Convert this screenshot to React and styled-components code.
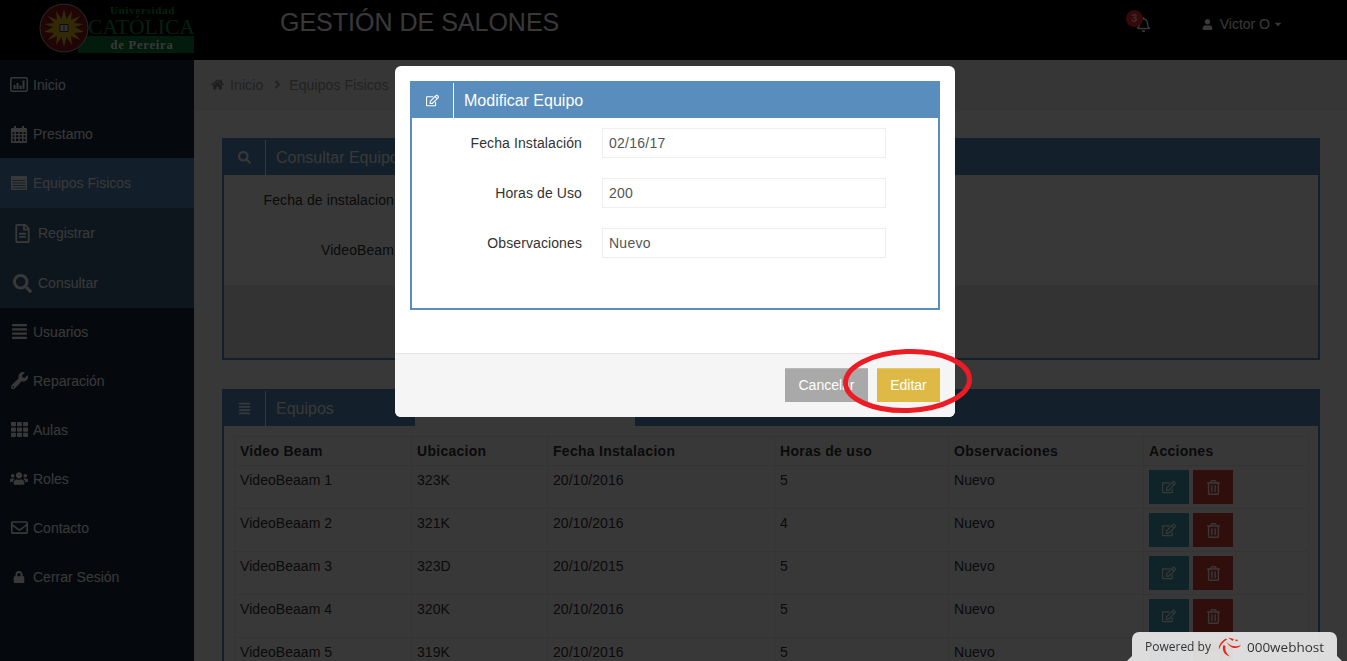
import React from 'react';
import styled, { createGlobalStyle } from 'styled-components';
import {
  FaRegFileAlt,
  FaSearch,
  FaWrench,
  FaTh,
  FaUsers,
  FaRegEnvelope,
  FaLock,
  FaHome,
  FaUser,
  FaRegBell,
  FaRegEdit,
  FaRegTrashAlt,
  FaAlignJustify,
  FaCaretDown,
  FaAngleRight,
} from 'react-icons/fa';

const BLUE = '#588dbd';

const GlobalStyle = createGlobalStyle`
  html, body {
    margin: 0;
    height: 100%;
    overflow: hidden;
    background: #fff;
  }
  body {
    font-family: "Liberation Sans", Arial, sans-serif;
    font-size: 14px;
    color: #333;
  }
  * { box-sizing: border-box; }
`;

const Page = styled.div`
  height: 661px;
  overflow: hidden;
  display: flex;
  flex-direction: column;
`;

const TopBar = styled.header`
  flex: 0 0 60px;
  background: #000;
  display: flex;
  align-items: flex-start;
  color: #fff;
`;

const LogoBox = styled.div`
  width: 194px;
  height: 60px;
  flex: none;
`;

const AppTitle = styled.h1`
  margin: 7px 0 0 86px;
  font-size: 25px;
  line-height: 30px;
  font-weight: 400;
`;

const UserArea = styled.div`
  margin-left: auto;
  padding-right: 64px;
  display: flex;
  align-items: center;
  height: 48px;
`;

const BellWrap = styled.div`
  position: relative;
  display: flex;
  margin-right: 51px;
  font-size: 15px;
`;

const Badge = styled.span`
  position: absolute;
  left: -10px;
  top: -7px;
  width: 17px;
  height: 17px;
  border-radius: 50%;
  background: #ff2a2a;
  color: #ddd;
  font-size: 11px;
  font-weight: 700;
  line-height: 17px;
  text-align: center;
`;

const UserName = styled.span`
  margin: 0 3px 0 7px;
`;

const Body = styled.div`
  flex: 1;
  display: flex;
  min-height: 0;
`;

const Sidebar = styled.nav`
  flex: 0 0 194px;
  background: #17293b;
`;

const NavItem = styled.a`
  display: flex;
  align-items: center;
  height: ${(p) => (p.$sub || p.$active ? 50 : 49)}px;
  padding-left: ${(p) => (p.$sub ? 13 : 10)}px;
  padding-bottom: ${(p) => (p.$tail ? 2 : 0)}px;
  color: #fff;
  font-size: 14px;
  background: ${(p) => (p.$active ? '#5288ba' : p.$sub ? '#406585' : 'transparent')};
`;

const NavIcon = styled.span`
  display: flex;
  justify-content: ${(p) => (p.$sub ? 'flex-start' : 'center')};
  width: ${(p) => (p.$sub ? 20 : 18)}px;
  margin-right: 5px;
  font-size: ${(p) => p.$size || 17}px;
`;

const Main = styled.main`
  flex: 1;
  min-width: 0;
  background: #fff;
`;

const Breadcrumb = styled.div`
  height: 50px;
  padding-left: 17px;
  display: flex;
  align-items: center;
  background: #f5f5f5;
  border-bottom: 1px solid #f0f0f0;
  color: #999;
  letter-spacing: 0.1px;
`;

const CrumbHome = styled.span`
  display: flex;
  font-size: 13px;
  margin-right: 6px;
  color: #888;
`;

const CrumbSep = styled.span`
  display: flex;
  margin: 0 5px 0 8px;
  font-size: 13px;
`;

const Content = styled.div`
  padding: 28px 27px 0 28px;
`;

const Panel = styled.section`
  border: 2px solid ${BLUE};
  margin-bottom: 29px;
  height: ${(p) => p.$height};
  background: #fff;
  display: flex;
  flex-direction: column;
`;

const PanelHead = styled.div`
  position: relative;
  flex: 0 0 35px;
  display: flex;
  background: ${BLUE};
  color: #fff;
`;

const HeadIcon = styled.span`
  flex: 0 0 42px;
  display: flex;
  align-items: center;
  justify-content: center;
  font-size: 13px;
  border-right: 1px solid #fff;
`;

const HeadTitle = styled.h3`
  margin: 0 0 0 10px;
  font-size: 16px;
  font-weight: 400;
  line-height: 35px;
`;

const HeadNotch = styled.div`
  position: absolute;
  left: 191px;
  bottom: 0;
  width: 220px;
  height: 9px;
  background: #fff;
`;

const PanelBody = styled.div`
  flex: 1;
  padding-top: 10px;
`;

const PanelFooter = styled.div`
  flex: 0 0 73px;
  background: #e8e8e8;
`;

const FormRow = styled.div`
  display: flex;
  align-items: center;
  height: 30px;
  margin-bottom: 20px;
`;

const FieldLabel = styled.label`
  flex: 0 0 170px;
  margin-right: 20px;
  text-align: right;
  color: #333;
  letter-spacing: 0.1px;
`;

const Field = styled.input`
  width: 284px;
  height: 30px;
  padding: 0 6px;
  border: 1px solid #eee;
  background: #fff;
  color: #555;
  font: inherit;
  letter-spacing: 0.25px;
  outline: none;
`;

const TableArea = styled.div`
  padding: 10px 10px 0;
`;

const Table = styled.table`
  width: 1074px;
  table-layout: fixed;
  border-collapse: collapse;
  letter-spacing: 0.05px;
`;

const Th = styled.th`
  width: ${(p) => p.$width}px;
  height: 29px;
  padding: 0 5px;
  text-align: left;
  font-weight: 700;
  letter-spacing: 0.28px;
  border: 1px solid #eee;
`;

const Td = styled.td`
  height: 43px;
  padding: 6px 5px 0;
  vertical-align: top;
  line-height: 17px;
  border: 1px solid #eee;
`;

const ActionCell = styled(Td)`
  padding-top: 4px;
`;

const Actions = styled.div`
  display: flex;
  gap: 4px;
`;

const ActionButton = styled.button`
  width: 40px;
  height: 34px;
  padding: 0;
  border: 0;
  display: flex;
  align-items: center;
  justify-content: center;
  color: #fff;
  font-size: ${(p) => (p.$danger ? 15 : 14)}px;
  background: ${(p) => (p.$danger ? '#d43f3a' : '#46a3b8')};
`;

const Backdrop = styled.div`
  position: fixed;
  inset: 0;
  background: rgba(0, 0, 0, 0.78);
`;

const Modal = styled.div`
  position: fixed;
  left: 395px;
  top: 66px;
  width: 560px;
  height: 351px;
  background: #fff;
  border-radius: 6px;
  display: flex;
  flex-direction: column;
`;

const ModalBody = styled.div`
  flex: 0 0 287px;
  padding: 15px;
`;

const ModalPanel = styled(Panel)`
  margin: 0;
  height: 229px;
`;

const ModalFooter = styled.div`
  flex: 1;
  display: flex;
  justify-content: flex-end;
  gap: 9px;
  padding: 14px 15px 0;
  background: #f5f5f5;
  border-top: 1px solid #e5e5e5;
  border-radius: 0 0 6px 6px;
`;

const FooterButton = styled.button`
  height: 34px;
  width: ${(p) => (p.$primary ? 63 : 83)}px;
  padding: 0 0 2px;
  border: 0;
  border-top: 1px solid ${(p) => (p.$primary ? '#e9c96b' : '#b9b9b9')};
  background: ${(p) => (p.$primary ? '#dfb946' : '#a9a9a9')};
  color: #fff;
  font: inherit;
`;

const Highlight = styled.svg`
  position: fixed;
  left: 838px;
  top: 344px;
  width: 140px;
  height: 74px;
  pointer-events: none;
`;

const HostBadge = styled.div`
  position: fixed;
  left: 1132px;
  top: 632px;
  width: 205px;
  height: 29px;
  padding: 0 0 0 13px;
  display: flex;
  align-items: center;
  white-space: nowrap;
  background: rgba(240, 240, 240, 0.9);
  border-radius: 7px 7px 0 0;
  color: #333;
  font-family: "Open Sans", sans-serif;
  font-size: 12px;

  &::before,
  &::after {
    content: '';
    position: absolute;
    bottom: 0;
    width: 5px;
    height: 5px;
    background: rgba(240, 240, 240, 0.9);
  }
  &::before {
    left: -5px;
    clip-path: polygon(100% 0, 100% 100%, 0 100%);
  }
  &::after {
    right: -5px;
    clip-path: polygon(0 0, 100% 100%, 0 100%);
  }
`;

const HostName = styled.span`
  margin-left: 5px;
  font-size: 13.5px;
`;

const ChartBoxIcon = () => (
  <svg width="18" height="15" viewBox="0 0 18 15">
    <rect x="0.75" y="0.75" width="16.5" height="13.5" rx="1.5" fill="none" stroke="currentColor" strokeWidth="1.5" />
    <path d="M3.5 8h2v4h-2zM6.5 6h2v6h-2zM9.5 8.5h2V12h-2zM12.5 3.5h2V12h-2z" fill="currentColor" />
  </svg>
);

const CalendarIcon = () => (
  <svg width="16" height="18" viewBox="0 0 16 18">
    <path
      fillRule="evenodd"
      fill="currentColor"
      d="M1 3h2V1h2v2h6V1h2v2h2a1 1 0 0 1 1 1v13a1 1 0 0 1-1 1H1a1 1 0 0 1-1-1V4a1 1 0 0 1 1-1zM1.5 7v2h2V7zm3.5 0v2h2.300V7zm3.700 0v2H11V7zm3.800 0v2h2V7zM1.500 10.300v2h2v-2zm3.500 0v2h2.300v-2zm3.700 0v2H11v-2zm3.800 0v2h2v-2zM1.500 13.600v2.600h2v-2.600zm3.500 0v2.600h2.300v-2.600zm3.700 0v2.600H11v-2.600zm3.800 0v2.600h2v-2.600z"
    />
  </svg>
);

const ListBoxIcon = () => (
  <svg width="16" height="14" viewBox="0 0 16 14">
    <path
      fillRule="evenodd"
      fill="currentColor"
      d="M1 0h14a1 1 0 0 1 1 1v12a1 1 0 0 1-1 1H1a1 1 0 0 1-1-1V1a1 1 0 0 1 1-1zm.5 4v1h13V4zm0 2.500v1h13v-1zm0 2.500v1h13V9zm0 2.500v1h13v-1z"
    />
  </svg>
);

const navItems = [
  { label: 'Inicio', icon: <ChartBoxIcon /> },
  { label: 'Prestamo', icon: <CalendarIcon /> },
  { label: 'Equipos Fisicos', icon: <ListBoxIcon />, active: true },
  { label: 'Registrar', icon: <FaRegFileAlt />, sub: true, size: 19 },
  { label: 'Consultar', icon: <FaSearch />, sub: true, size: 19 },
  { label: 'Usuarios', icon: <FaAlignJustify />, tail: true },
  { label: 'Reparación', icon: <FaWrench />, tail: true },
  { label: 'Aulas', icon: <FaTh />, tail: true },
  { label: 'Roles', icon: <FaUsers />, size: 19, tail: true },
  { label: 'Contacto', icon: <FaRegEnvelope />, tail: true },
  { label: 'Cerrar Sesión', icon: <FaLock />, size: 12, tail: true },
];

const columns = [
  { name: 'Video Beam', width: 177 },
  { name: 'Ubicacion', width: 136 },
  { name: 'Fecha Instalacion', width: 227 },
  { name: 'Horas de uso', width: 174 },
  { name: 'Observaciones', width: 195 },
  { name: 'Acciones', width: 165 },
];

const rows = [
  ['VideoBeaam 1', '323K', '20/10/2016', '5', 'Nuevo'],
  ['VideoBeaam 2', '321K', '20/10/2016', '4', 'Nuevo'],
  ['VideoBeaam 3', '323D', '20/10/2015', '5', 'Nuevo'],
  ['VideoBeaam 4', '320K', '20/10/2016', '5', 'Nuevo'],
  ['VideoBeaam 5', '319K', '20/10/2016', '5', 'Nuevo'],
];

const modalFields = [
  ['Fecha Instalación', '02/16/17'],
  ['Horas de Uso', '200'],
  ['Observaciones', 'Nuevo'],
];

// sun seal plus the three lines of the university name
const Logo = () => (
  <svg width="194" height="60" viewBox="0 0 194 60">
    <rect x="78" y="36" width="116" height="17" fill="#0d7a3c" />
    <text x="142.500" y="14" textAnchor="middle" fontFamily="Liberation Serif" fontWeight="700" fontSize="11" letterSpacing="0.7" fill="#0d9a4a">
      Universidad
    </text>
    <text x="141.500" y="34" textAnchor="middle" fontFamily="Liberation Serif" fontSize="21.600" fill="#0d9a4a">
      CATÓLICA
    </text>
    <text x="142" y="49" textAnchor="middle" fontFamily="Liberation Serif" fontWeight="700" fontSize="12.500" letterSpacing="0.8" fill="#fff">
      de Pereira
    </text>
    <circle cx="64" cy="28" r="24" fill="#8e1a1a" stroke="#bbb" strokeWidth="1" />
    <polygon
      points="64,9 66.500,19 72,11 71,20 80,16 74,23 84,24 75,27 84,32 74,33 80,40 71,36 72,45 66.500,37 64,47 61.500,37 56,45 57,36 48,40 54,33 44,32 53,27 44,24 54,23 48,16 57,20 56,11 61.500,19"
      fill="#e2bd1c"
    />
    <rect x="60" y="24.500" width="8" height="7" fill="#ddd" stroke="#222" strokeWidth="0.8" />
    <path d="M64 24.500v7" stroke="#222" strokeWidth="0.6" />
  </svg>
);

const HostLogo = () => (
  <svg width="24" height="20" viewBox="0 0 24 20" style={{ margin: '0 0 0 7px', flex: 'none' }}>
    <path d="M8 1.500C3.500 4 0 8.500 1 12.500c1-3.500 3.500-7 8-10z" fill="#e8281c" />
    <path d="M5.500 8C3.500 12.500 6 18 12 19.500 9 17 6.500 13.500 7.500 9z" fill="#e8281c" />
    <path d="M8.500 4.500c2.500 4 8.500 6.500 14.500 3.500-2.500 4.500-11 4.500-14.500-3.500z" fill="#e8281c" />
    <path d="M10 .5l6 1.500-1.500 2zM17 2.500l3.500.5-2.500 1.500z" fill="#e8281c" />
  </svg>
);

const App = () => {
  return (
    <>
      <GlobalStyle />
      <Page>
        <TopBar>
          <LogoBox>
            <Logo />
          </LogoBox>
          <AppTitle>GESTIÓN DE SALONES</AppTitle>
          <UserArea>
            <BellWrap>
              <Badge>3</Badge>
              <FaRegBell />
            </BellWrap>
            <FaUser size={11} />
            <UserName>Victor O</UserName>
            <FaCaretDown size={10} />
          </UserArea>
        </TopBar>
        <Body>
          <Sidebar>
            {navItems.map((item) => (
              <NavItem key={item.label} $active={item.active} $sub={item.sub} $tail={item.tail}>
                <NavIcon $sub={item.sub} $size={item.size}>
                  {item.icon}
                </NavIcon>
                {item.label}
              </NavItem>
            ))}
          </Sidebar>
          <Main>
            <Breadcrumb>
              <CrumbHome>
                <FaHome />
              </CrumbHome>
              Inicio
              <CrumbSep>
                <FaAngleRight />
              </CrumbSep>
              Equipos Fisicos
            </Breadcrumb>
            <Content>
              <Panel $height="222px">
                <PanelHead>
                  <HeadIcon>
                    <FaSearch />
                  </HeadIcon>
                  <HeadTitle>Consultar Equipos</HeadTitle>
                </PanelHead>
                <PanelBody>
                  <FormRow>
                    <FieldLabel>Fecha de instalacion</FieldLabel>
                    <Field readOnly />
                  </FormRow>
                  <FormRow>
                    <FieldLabel>VideoBeam</FieldLabel>
                    <Field readOnly />
                  </FormRow>
                </PanelBody>
                <PanelFooter />
              </Panel>
              <Panel>
                <PanelHead>
                  <HeadIcon>
                    <FaAlignJustify />
                  </HeadIcon>
                  <HeadTitle>Equipos</HeadTitle>
                  <HeadNotch />
                </PanelHead>
                <TableArea>
                  <Table>
                    <thead>
                      <tr>
                        {columns.map((col) => (
                          <Th key={col.name} $width={col.width}>
                            {col.name}
                          </Th>
                        ))}
                      </tr>
                    </thead>
                    <tbody>
                      {rows.map((row) => (
                        <tr key={row[0]}>
                          {row.map((cell, i) => (
                            <Td key={i}>{cell}</Td>
                          ))}
                          <ActionCell>
                            <Actions>
                              <ActionButton>
                                <FaRegEdit />
                              </ActionButton>
                              <ActionButton $danger>
                                <FaRegTrashAlt />
                              </ActionButton>
                            </Actions>
                          </ActionCell>
                        </tr>
                      ))}
                    </tbody>
                  </Table>
                </TableArea>
              </Panel>
            </Content>
          </Main>
        </Body>
      </Page>

      <Backdrop />

      <Modal>
        <ModalBody>
          <ModalPanel $height="229px">
            <PanelHead>
              <HeadIcon>
                <FaRegEdit />
              </HeadIcon>
              <HeadTitle>Modificar Equipo</HeadTitle>
            </PanelHead>
            <PanelBody>
              {modalFields.map(([label, value]) => (
                <FormRow key={label}>
                  <FieldLabel>{label}</FieldLabel>
                  <Field readOnly value={value} />
                </FormRow>
              ))}
            </PanelBody>
          </ModalPanel>
        </ModalBody>
        <ModalFooter>
          <FooterButton>Cancelar</FooterButton>
          <FooterButton $primary>Editar</FooterButton>
        </ModalFooter>
      </Modal>

      <Highlight viewBox="0 0 140 74">
        <ellipse cx="69.500" cy="37" rx="62" ry="29.500" fill="none" stroke="#ed1c24" strokeWidth="5" transform="rotate(-2 69.500 37)" />
      </Highlight>

      <HostBadge>
        Powered by
        <HostLogo />
        <HostName>000webhost</HostName>
      </HostBadge>
    </>
  );
};

export default App;
